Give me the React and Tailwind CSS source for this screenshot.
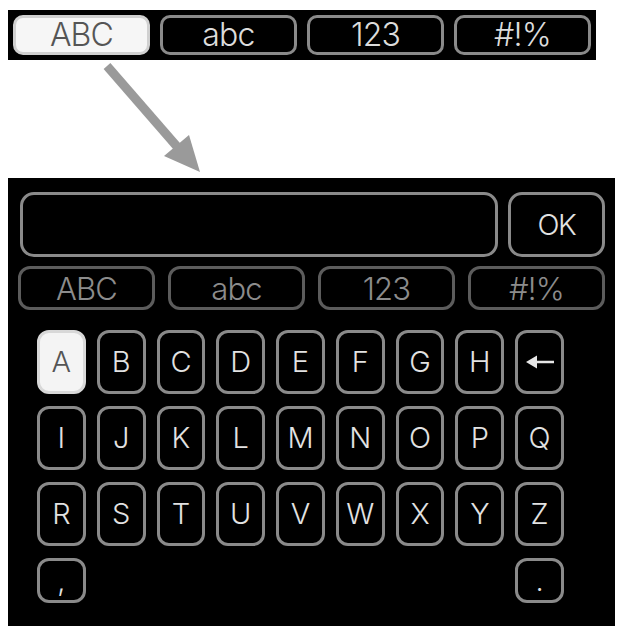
import React from 'react';

const modes = ['ABC', 'abc', '123', '#!%'];
const rows = [
  ['A', 'B', 'C', 'D', 'E', 'F', 'G', 'H', 'back'],
  ['I', 'J', 'K', 'L', 'M', 'N', 'O', 'P', 'Q'],
  ['R', 'S', 'T', 'U', 'V', 'W', 'X', 'Y', 'Z'],
];

const BackArrow = () => (
  <svg width="28" height="14" viewBox="0 0 28 14">
    <path d="M0 7 L11 0.5 L11 13.5 Z" fill="#e6e6e6" />
    <line x1="9" y1="7" x2="28" y2="7" stroke="#e6e6e6" strokeWidth="2.5" />
  </svg>
);

const Key = ({ label, active }) => (
  <div
    className={
      'h-[64px] rounded-[12px] border-[3px] flex items-center justify-center text-[29px] font-light ' +
      (active ? 'bg-[#f4f4f4] border-[#d8d8d8] text-[#555]' : 'border-[#8a8a8a] text-[#e2e2e2]')
    }
  >
    {label === 'back' ? <BackArrow /> : label}
  </div>
);

export default function App() {
  return (
    <div className="w-[620px] h-[626px] bg-white overflow-hidden" style={{ fontFamily: 'Inter, "DejaVu Sans", sans-serif' }}>
      {/* mode bar preview */}
      <div className="pt-[10px] pl-[8px]">
        <div className="w-[588px] h-[50px] bg-black flex items-center gap-[10px] pl-[5px]">
          {modes.map((m, i) => (
            <div
              key={m}
              className={
                'w-[137px] h-[40px] rounded-[10px] border-[3px] flex items-center justify-center text-[32px] font-light tracking-tight leading-none ' +
                (i === 0 ? 'bg-[#f6f6f6] border-[#d0d0d0] text-[#555]' : 'border-[#8a8a8a] text-[#dcdcdc]')
              }
            >
              {m}
            </div>
          ))}
        </div>
      </div>

      {/* arrow */}
      <svg width="620" height="118" viewBox="0 0 620 118" className="block">
        <line x1="107" y1="6" x2="180" y2="90" stroke="#9a9a9a" strokeWidth="9" />
        <path d="M200 112 L164 96 L189 75 Z" fill="#9a9a9a" />
      </svg>

      {/* keyboard */}
      <div className="ml-[8px] w-[607px] h-[448px] bg-black pt-[14px]">
        <div className="flex gap-[10px] pl-[12px]">
          <div className="w-[478px] h-[65px] rounded-[14px] border-[3px] border-[#8a8a8a]" />
          <div className="w-[97px] h-[65px] rounded-[14px] border-[3px] border-[#8a8a8a] flex items-center justify-center text-[29px] font-light tracking-tighter text-[#e2e2e2]">
            OK
          </div>
        </div>

        <div className="flex gap-[13px] pl-[10px] mt-[9px]">
          {modes.map((m) => (
            <div
              key={m}
              className="w-[137px] h-[44px] rounded-[12px] border-[3px] border-[#5c5c5c] flex items-center justify-center text-[31px] font-light tracking-tight leading-none text-[#8c8c8c]"
            >
              {m}
            </div>
          ))}
        </div>

        <div className="pl-[29px] mt-[20px] w-[556px] flex flex-col gap-[12px]">
          {rows.map((row, r) => (
            <div key={r} className="grid grid-cols-9 gap-[11px]">
              {row.map((k) => (
                <Key key={k} label={k} active={k === 'A'} />
              ))}
            </div>
          ))}
          <div className="grid grid-cols-9 gap-[11px]">
            <div className="h-[45px] rounded-[12px] border-[3px] border-[#8a8a8a] flex items-center justify-center text-[29px] font-light text-[#e2e2e2]">
              ,
            </div>
            <div className="col-start-9 h-[45px] rounded-[12px] border-[3px] border-[#8a8a8a] flex items-center justify-center text-[29px] font-light text-[#e2e2e2]">
              .
            </div>
          </div>
        </div>
      </div>
    </div>
  );
}
